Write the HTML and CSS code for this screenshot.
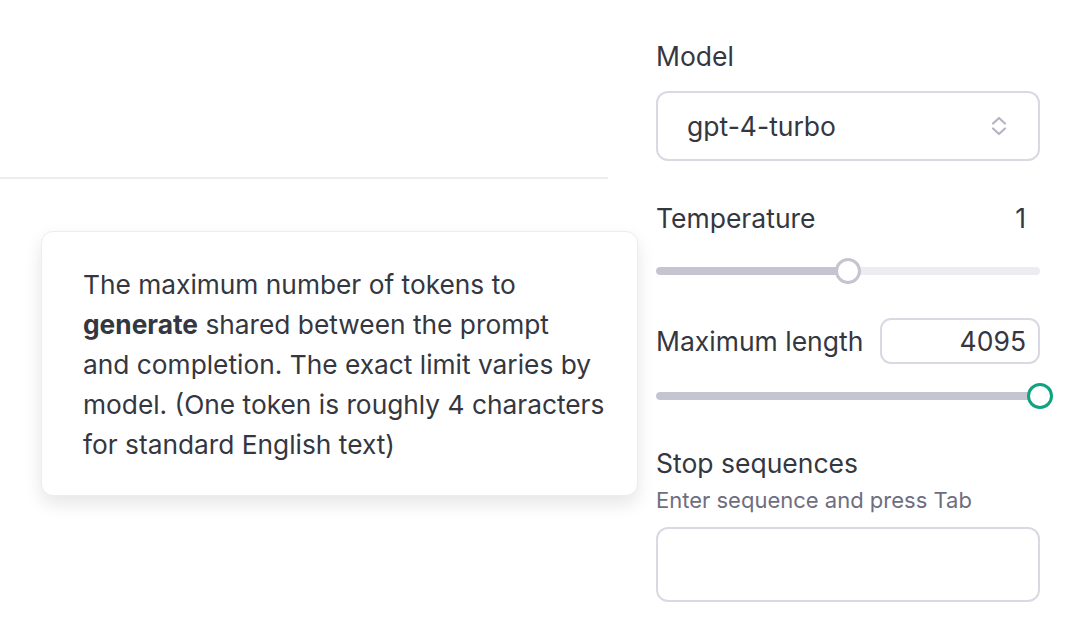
FILE: index.html
```html
<!DOCTYPE html>
<html>
  <head>
    <meta charset="utf-8" />
    <title>Playground settings</title>
    <link rel="stylesheet" href="styles.css">
  </head>
  <body>
    <div class="page">
      <div class="main">
        <div class="divider"></div>
        <div class="tooltip">
          <p>The maximum number of tokens to<br><b>generate</b> shared between the prompt<br>and completion. The exact limit varies by<br>model. (One token is roughly 4 characters<br>for standard English text)</p>
        </div>
      </div>

      <div class="sidebar">
        <div class="label">Model</div>
        <div class="select">
          <span>gpt-4-turbo</span>
          <svg class="chevrons" width="16" height="24" viewBox="0 0 16 24" fill="none" stroke="#b4b4c4" stroke-width="2.2" stroke-linecap="round" stroke-linejoin="round">
            <path d="M2 9.5l6-5.5 6 5.5" />
            <path d="M2 14.5l6 5.5 6-5.5" />
          </svg>
        </div>

        <div class="row temp-row">
          <span class="label">Temperature</span>
          <span class="value">1</span>
        </div>
        <div class="slider">
          <div class="track"><div class="fill" style="width:50%"></div></div>
          <div class="thumb" style="left:50%"></div>
        </div>

        <div class="row len-row">
          <span class="label">Maximum length</span>
          <div class="num-input">4095</div>
        </div>
        <div class="slider">
          <div class="track"><div class="fill" style="width:100%"></div></div>
          <div class="thumb active" style="left:100%"></div>
        </div>

        <div class="label stop-label">Stop sequences</div>
        <div class="hint">Enter sequence and press Tab</div>
        <div class="textbox"></div>
      </div>
    </div>
  </body>
</html>
```

FILE: styles.css
```css
/* base */
html,body{margin:0;padding:0;height:100%;background:#fff;}
body{font-family:Inter,"Noto Sans",sans-serif;color:#353740;font-size:26.5px;}
p{margin:0;}

/* layout */
.page{display:flex;gap:48px;height:100%;}
.main{position:relative;width:608px;flex:none;}
.divider{height:2px;background:#ececf1;margin-top:177px;}

/* tooltip */
.tooltip{position:absolute;left:41px;top:231px;width:597px;box-sizing:border-box;
  padding:33px 20px 30px 41px;background:#fff;border:1px solid #ececf1;border-radius:12px;
  box-shadow:0 8px 18px rgba(0,0,0,0.10);}
.tooltip p{font-size:26.3px;line-height:40px;white-space:nowrap;}
.tooltip b{font-weight:700;}

/* sidebar */
.sidebar{width:384px;flex:none;padding-top:40px;}
.label{line-height:32px;}
.select{margin-top:19px;height:70px;box-sizing:border-box;border:2px solid #d9d9e3;border-radius:12px;
  display:flex;align-items:center;justify-content:space-between;padding:0 31px 0 29px;}
.chevrons{display:block;}

.row{display:flex;align-items:center;justify-content:space-between;}
.temp-row{margin-top:41px;}
.temp-row .value{padding-right:14px;line-height:32px;}
.len-row{margin-top:34px;}
.num-input{width:160px;height:46px;box-sizing:border-box;border:2px solid #d9d9e3;border-radius:11px;
  text-align:right;padding-right:12px;line-height:42px;}

/* slider */
.slider{position:relative;height:26px;margin-top:24px;}
.len-row + .slider{margin-top:19px;}
.track{position:absolute;left:0;right:0;top:9px;height:8px;border-radius:4px;background:#ececf1;overflow:hidden;}
.fill{height:100%;background:#c5c5d2;border-radius:4px;}
.thumb{position:absolute;top:0;width:26px;height:26px;margin-left:-13px;box-sizing:border-box;
  border:3px solid #c5c5d2;border-radius:50%;background:#fff;}
.thumb.active{border-color:#10a37f;}

.stop-label{margin-top:38px;}
.hint{margin-top:7px;font-size:22px;line-height:28px;color:#6e6e80;}
.textbox{margin-top:13px;height:75px;box-sizing:border-box;border:2px solid #d9d9e3;border-radius:12px;}
```
